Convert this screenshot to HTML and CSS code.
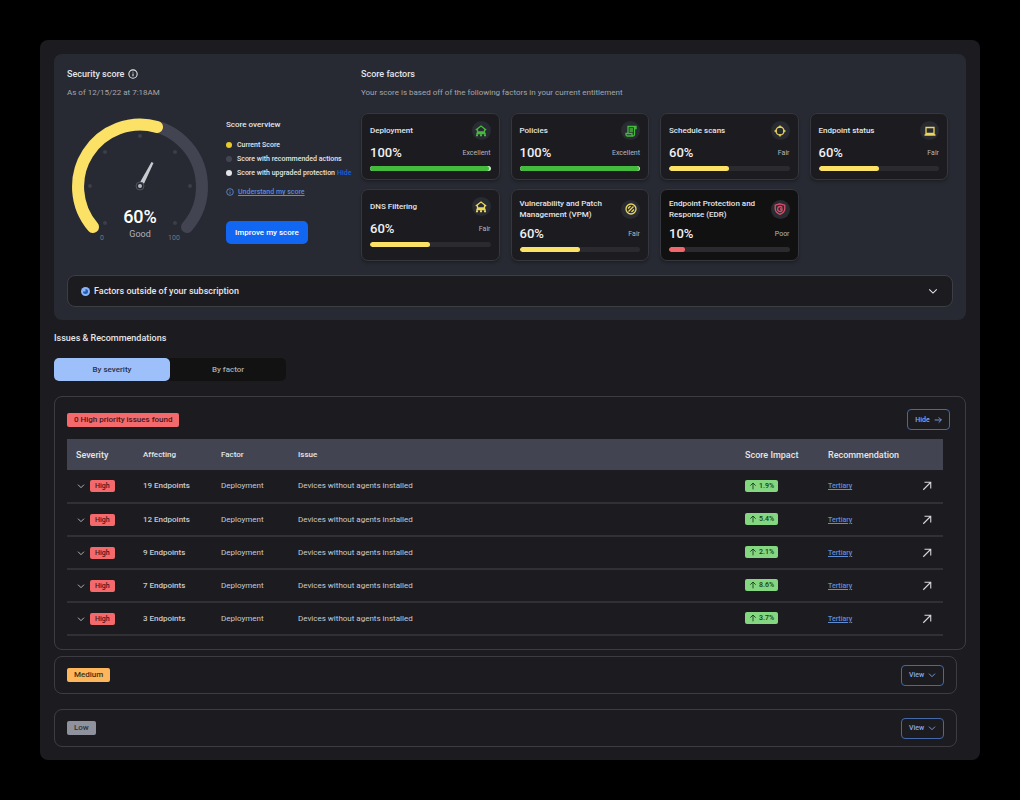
FILE: index.html
```html
<!DOCTYPE html>
<html lang="en">
<head>
    <meta charset="UTF-8">
    <meta name="viewport" content="width=device-width, initial-scale=1.0">
    <title>Security Score</title>
    <link rel="stylesheet" href="styles.css">
</head>
<body>

    <!-- Shared icons -->
    <svg class="sprite" aria-hidden="true">
        <symbol id="i-info" viewBox="0 0 12 12"><circle cx="6" cy="6" r="5"/><path d="M6 5.4v3.2M6 3.2v1"/></symbol>
        <symbol id="i-down" viewBox="0 0 12 12"><path d="M1.5 4 6 8.500 10.500 4"/></symbol>
        <symbol id="i-right" viewBox="0 0 12 12"><path d="M1 6h10M7 2l4 4-4 4"/></symbol>
        <symbol id="i-up" viewBox="0 0 12 12"><path d="M6 11V1.500M2 5.500l4-4 4 4"/></symbol>
        <symbol id="i-open" viewBox="0 0 12 12"><path d="M1.500 10.500l9-9M3 1.500h7.500V9"/></symbol>
        <symbol id="i-network" viewBox="0 0 12 12"><path d="M.8 5 6 1l5.200 4M2.500 4.500V7h7V4.500M6 7v3M2 10V8.500h8V10M1 10.500h2M5 10.500h2M9 10.500h2"/></symbol>
        <symbol id="i-policy" viewBox="0 0 12 12"><path d="M3 8V1.500h8V3.500H9.500M9.500 1.500V9.500q0 1.500-1.500 1.500H2.500Q1 11 1 9.500V8.500h6V9.500q0 1.500 1 1.500M4.500 4H8M4.500 6H8"/></symbol>
        <symbol id="i-target" viewBox="0 0 12 12"><circle cx="6" cy="6" r="4"/><path d="M6 .5v2.500M6 9v2.500M.5 6h2.500M9 6h2.500"/></symbol>
        <symbol id="i-laptop" viewBox="0 0 12 12"><path d="M2 2.500h8v6H2zM.5 10h11"/></symbol>
        <symbol id="i-patch" viewBox="0 0 12 12"><circle cx="6" cy="6" r="5"/><path d="M3.500 8.500l5-5M3 5.500 5.500 3M6.500 9 9 6.500"/></symbol>
        <symbol id="i-shield" viewBox="0 0 12 12"><path d="M6 .8 10.800 2.200V6Q10.500 9.500 6 11.300 1.500 9.500 1.200 6V2.200z"/><path d="M8.300 4.500Q6 2.500 4 4.500q-1 2 .5 3.500 2 1.200 3.500-.5V6H6"/></symbol>
    </svg>

    <main class="app">
        <section class="score-panel">
            <div class="score-top">
                <div class="score">
                    <h2>Security score <svg class="icon info"><use href="#i-info"/></svg></h2>
                    <p class="sub">As of 12/15/22 at 7:18AM</p>
                    <div class="score-body">
                        <svg class="gauge" viewBox="0 0 146 130" role="img" aria-label="Score 60%, good">
                            <path class="track" d="M26 111A62 62 0 1 1 120 111"/>
                            <path class="value" d="M26 111A62 62 0 0 1 90 11"/>
                            <g class="ticks">
                                <circle cx="73" cy="20" r="2"/>
                                <circle cx="38" cy="36" r="2"/>
                                <circle cx="108" cy="36" r="2"/>
                                <circle cx="23" cy="70" r="2"/>
                                <circle cx="123" cy="70" r="2"/>
                                <circle cx="38" cy="107" r="2"/>
                                <circle cx="108" cy="107" r="2"/>
                            </g>
                            <path class="needle" d="M71.500 69 84.500 46l2 1L75.500 71z"/>
                            <circle class="hub" cx="73" cy="70" r="4"/>
                            <circle class="hub-dot" cx="73" cy="70" r="2"/>
                            <text class="percent" x="73" y="107">60%</text>
                            <text class="grade" x="73" y="121">Good</text>
                            <text class="limit" x="35" y="124">0</text>
                            <text class="limit" x="107" y="124">100</text>
                        </svg>
                        <div class="overview">
                            <h3>Score overview</h3>
                            <ul>
                                <li><span class="dot current"></span>Current Score</li>
                                <li><span class="dot recommended"></span>Score with recommended actions</li>
                                <li><span class="dot upgraded"></span>Score with upgraded protection <a href="#">Hide</a></li>
                            </ul>
                            <a class="understand" href="#"><svg class="icon"><use href="#i-info"/></svg><span>Understand my score</span></a>
                            <button class="improve" type="button">Improve my score</button>
                        </div>
                    </div>
                </div>

                <div class="factors">
                    <h2>Score factors</h2>
                    <p class="sub">Your score is based off of the following factors in your current entitlement</p>
                    <div class="cards">
                        <article class="card good">
                            <div class="card-head"><h3>Deployment</h3><span class="badge"><svg class="icon"><use href="#i-network"/></svg></span></div>
                            <div class="card-score"><strong>100%</strong><span>Excellent</span></div>
                            <div class="bar"><div class="fill" style="width: 99%"></div></div>
                        </article>
                        <article class="card good">
                            <div class="card-head"><h3>Policies</h3><span class="badge"><svg class="icon"><use href="#i-policy"/></svg></span></div>
                            <div class="card-score"><strong>100%</strong><span>Excellent</span></div>
                            <div class="bar"><div class="fill" style="width: 99%"></div></div>
                        </article>
                        <article class="card fair">
                            <div class="card-head"><h3>Schedule scans</h3><span class="badge"><svg class="icon"><use href="#i-target"/></svg></span></div>
                            <div class="card-score"><strong>60%</strong><span>Fair</span></div>
                            <div class="bar"><div class="fill" style="width: 50%"></div></div>
                        </article>
                        <article class="card fair">
                            <div class="card-head"><h3>Endpoint status</h3><span class="badge"><svg class="icon"><use href="#i-laptop"/></svg></span></div>
                            <div class="card-score"><strong>60%</strong><span>Fair</span></div>
                            <div class="bar"><div class="fill" style="width: 50%"></div></div>
                        </article>
                        <article class="card fair">
                            <div class="card-head"><h3>DNS Filtering</h3><span class="badge"><svg class="icon"><use href="#i-network"/></svg></span></div>
                            <div class="card-score"><strong>60%</strong><span>Fair</span></div>
                            <div class="bar"><div class="fill" style="width: 50%"></div></div>
                        </article>
                        <article class="card fair">
                            <div class="card-head"><h3>Vulnerability and Patch Management (VPM)</h3><span class="badge"><svg class="icon"><use href="#i-patch"/></svg></span></div>
                            <div class="card-score"><strong>60%</strong><span>Fair</span></div>
                            <div class="bar"><div class="fill" style="width: 50%"></div></div>
                        </article>
                        <article class="card poor">
                            <div class="card-head"><h3>Endpoint Protection and Response (EDR)</h3><span class="badge"><svg class="icon"><use href="#i-shield"/></svg></span></div>
                            <div class="card-score"><strong>10%</strong><span>Poor</span></div>
                            <div class="bar"><div class="fill" style="width: 13%"></div></div>
                        </article>
                    </div>
                </div>
            </div>

            <button class="outside" type="button">
                <svg class="outside-icon" viewBox="0 0 10 10"><circle cx="5" cy="5" r="5" fill="#8ab4f8"/><path d="M5 2.200A2.800 2.800 0 1 1 2.200 5H5z" fill="#2459b8"/></svg>
                <span>Factors outside of your subscription</span>
                <svg class="icon chevron"><use href="#i-down"/></svg>
            </button>
        </section>

        <h2 class="issues-title">Issues &amp; Recommendations</h2>
        <div class="tabs">
            <button class="tab active" type="button">By severity</button>
            <button class="tab" type="button">By factor</button>
        </div>

        <section class="issues">
            <div class="issues-head">
                <span class="tag high">0 High priority issues found</span>
                <button class="toggle" type="button">Hide <svg class="icon"><use href="#i-right"/></svg></button>
            </div>
            <table>
                <colgroup>
                    <col class="c-severity"><col class="c-affecting"><col class="c-factor"><col><col class="c-impact"><col class="c-rec"><col class="c-open">
                </colgroup>
                <thead>
                    <tr>
                        <th class="large">Severity</th>
                        <th>Affecting</th>
                        <th>Factor</th>
                        <th>Issue</th>
                        <th class="large">Score Impact</th>
                        <th class="large" colspan="2">Recommendation</th>
                    </tr>
                </thead>
                <tbody>
                    <tr>
                        <td><div class="severity"><svg class="icon"><use href="#i-down"/></svg><span class="tag high small">High</span></div></td>
                        <td class="affecting">19 Endpoints</td>
                        <td>Deployment</td>
                        <td>Devices without agents installed</td>
                        <td><span class="impact"><svg class="icon"><use href="#i-up"/></svg>1.9%</span></td>
                        <td><a href="#">Tertiary</a></td>
                        <td><a class="open" href="#" aria-label="Open"><svg class="icon"><use href="#i-open"/></svg></a></td>
                    </tr>
                    <tr>
                        <td><div class="severity"><svg class="icon"><use href="#i-down"/></svg><span class="tag high small">High</span></div></td>
                        <td class="affecting">12 Endpoints</td>
                        <td>Deployment</td>
                        <td>Devices without agents installed</td>
                        <td><span class="impact"><svg class="icon"><use href="#i-up"/></svg>5.4%</span></td>
                        <td><a href="#">Tertiary</a></td>
                        <td><a class="open" href="#" aria-label="Open"><svg class="icon"><use href="#i-open"/></svg></a></td>
                    </tr>
                    <tr>
                        <td><div class="severity"><svg class="icon"><use href="#i-down"/></svg><span class="tag high small">High</span></div></td>
                        <td class="affecting">9 Endpoints</td>
                        <td>Deployment</td>
                        <td>Devices without agents installed</td>
                        <td><span class="impact"><svg class="icon"><use href="#i-up"/></svg>2.1%</span></td>
                        <td><a href="#">Tertiary</a></td>
                        <td><a class="open" href="#" aria-label="Open"><svg class="icon"><use href="#i-open"/></svg></a></td>
                    </tr>
                    <tr>
                        <td><div class="severity"><svg class="icon"><use href="#i-down"/></svg><span class="tag high small">High</span></div></td>
                        <td class="affecting">7 Endpoints</td>
                        <td>Deployment</td>
                        <td>Devices without agents installed</td>
                        <td><span class="impact"><svg class="icon"><use href="#i-up"/></svg>8.6%</span></td>
                        <td><a href="#">Tertiary</a></td>
                        <td><a class="open" href="#" aria-label="Open"><svg class="icon"><use href="#i-open"/></svg></a></td>
                    </tr>
                    <tr>
                        <td><div class="severity"><svg class="icon"><use href="#i-down"/></svg><span class="tag high small">High</span></div></td>
                        <td class="affecting">3 Endpoints</td>
                        <td>Deployment</td>
                        <td>Devices without agents installed</td>
                        <td><span class="impact"><svg class="icon"><use href="#i-up"/></svg>3.7%</span></td>
                        <td><a href="#">Tertiary</a></td>
                        <td><a class="open" href="#" aria-label="Open"><svg class="icon"><use href="#i-open"/></svg></a></td>
                    </tr>
                </tbody>
            </table>
        </section>

        <div class="groups">
            <section class="group">
                <span class="tag medium">Medium</span>
                <button class="toggle" type="button">View <svg class="icon"><use href="#i-down"/></svg></button>
            </section>
            <section class="group">
                <span class="tag low">Low</span>
                <button class="toggle" type="button">View <svg class="icon"><use href="#i-down"/></svg></button>
            </section>
        </div>
    </main>

</body>
</html>
```
FILE: styles.css
```css
* {
    margin: 0;
    padding: 0;
    box-sizing: border-box;
}

body {
    font-family: Roboto, sans-serif;
    font-size: 8px;
    line-height: 12px;
    background: #000;
    color: #e4e5e9;
    padding: 40px;
}

button {
    font: inherit;
    color: inherit;
    border: none;
    background: none;
    cursor: pointer;
}

a {
    color: #618cd2;
}

h2, h3 {
    font-weight: 500;
}

h2 {
    font-size: 9px;
    line-height: 12px;
}

.sprite {
    display: none;
}

.icon {
    width: 8px;
    height: 8px;
    flex: none;
    fill: none;
    stroke: currentColor;
    stroke-width: 1.3;
}

.app {
    background: #1c1c20;
    border-radius: 8px;
    padding: 14px 14px 13px;
}

/* Score panel */
.score-panel {
    background: #272a32;
    border-radius: 8px;
    padding: 14px 13px 13px;
}

.score-top {
    display: flex;
}

.score {
    flex: 0 0 294px;
    white-space: nowrap;
}

.score h2 {
    display: flex;
    align-items: center;
    gap: 4px;
}

.info {
    width: 10px;
    height: 10px;
}

.sub {
    color: #a4a6ae;
    margin-top: 7px;
}

.score-body {
    display: flex;
    gap: 13px;
    margin-top: 17px;
}

.gauge {
    width: 146px;
    height: 130px;
    flex: none;
}

.track,
.value {
    fill: none;
    stroke: #424551;
    stroke-width: 12;
    stroke-linecap: round;
}

.value {
    stroke: #fbe165;
}

.ticks {
    fill: #3c3f49;
}

.needle {
    fill: #c8cad0;
}

.hub {
    fill: #272a32;
    stroke: #50535d;
}

.hub-dot {
    fill: #b5b7be;
}

.gauge text {
    text-anchor: middle;
}

.percent {
    font-size: 18px;
    font-weight: 500;
    fill: #fff;
}

.grade {
    font-size: 9px;
    fill: #b0b2b9;
}

.limit {
    font-size: 7px;
    fill: #747780;
}

.overview {
    font-size: 7px;
    font-weight: 500;
    padding-top: 3px;
}

.overview h3 {
    font-size: 8px;
}

.overview ul {
    list-style: none;
    margin-top: 7px;
}

.overview li {
    display: flex;
    align-items: center;
    height: 14px;
}

.overview li a {
    color: #1762d8;
    margin-left: 2px;
    text-decoration: none;
}

.dot {
    width: 6px;
    height: 6px;
    border-radius: 50%;
    margin-right: 5px;
}

.current {
    background: #e9ca2c;
}

.recommended {
    background: #424551;
}

.upgraded {
    background: #e4e5e9;
}

.understand {
    display: flex;
    align-items: center;
    gap: 4px;
    margin-top: 6px;
    text-decoration: none;
}

.understand span {
    text-decoration: underline;
}

.improve {
    background: #1167f2;
    color: #fff;
    font-size: 8px;
    border-radius: 5px;
    height: 23px;
    padding: 0 9px;
    margin-top: 23px;
}

.factors {
    flex: 1;
    padding-right: 5px;
}

.cards {
    display: grid;
    grid-template-columns: repeat(4, 1fr);
    gap: 9px 11px;
    margin-top: 14px;
}

.card {
    background: #1c1c20;
    border: 1px solid #35373e;
    border-radius: 7px;
    padding: 7px 8px 8px;
    box-shadow: 0 2px 3px rgba(0, 0, 0, 0.25);
}

.card-head {
    display: flex;
    align-items: center;
    justify-content: space-between;
    margin-bottom: 5px;
}

.card h3 {
    font-size: 8px;
    line-height: 11px;
    padding: 1px 0;
}

.badge {
    display: flex;
    align-items: center;
    justify-content: center;
    flex: none;
    width: 19px;
    height: 19px;
    border-radius: 50%;
    background: #292b33;
}

.badge .icon {
    width: 12px;
    height: 12px;
}

.card-score {
    display: flex;
    align-items: center;
    justify-content: space-between;
    height: 16px;
    font-size: 7px;
    color: #b6b8be;
}

.card-score strong {
    font-size: 13px;
    font-weight: 500;
    color: #f0f0f3;
}

.bar {
    height: 5px;
    margin-top: 5px;
    border-radius: 3px;
    background: #2a2a2f;
    overflow: hidden;
}

.fill {
    height: 100%;
    border-radius: 3px;
}

.good .badge { color: #45bb3d; }
.good .bar { background: #c5e8c2; }
.good .fill { background: #45bb3d; }

.fair .badge { color: #ecd75d; }
.fair .fill { background: #fbe165; }

.poor { background: #111112; }
.poor .badge { color: #d9506a; }
.poor .fill { background: #f0686c; }

.outside {
    display: flex;
    align-items: center;
    width: 100%;
    height: 32px;
    margin-top: 14px;
    padding: 0 14px 0 13px;
    background: #1c1c20;
    border: 1px solid #3c3e45;
    border-radius: 8px;
    font-size: 9px;
    font-weight: 500;
    text-align: left;
}

.outside-icon {
    width: 9px;
    height: 9px;
    margin-right: 4px;
}

.chevron {
    width: 10px;
    height: 10px;
    margin-left: auto;
}

/* Issues */
.issues-title {
    margin-top: 12px;
}

.tabs {
    display: inline-flex;
    margin: 14px 0 15px;
    background: #121213;
    border-radius: 5px;
    vertical-align: top;
}

.tab {
    width: 116px;
    height: 23px;
    border-radius: 5px;
    color: #a9abb2;
    font-weight: 500;
}

.tab.active {
    background: #9dc0fb;
    color: #24324c;
}

.issues {
    border: 1px solid #3c3c42;
    border-radius: 8px;
    padding: 12px 15px 13px 12px;
}

.issues-head,
.group {
    display: flex;
    align-items: center;
    justify-content: space-between;
}

.tag {
    display: inline-block;
    padding: 0 7px;
    height: 14px;
    line-height: 14px;
    border-radius: 2px;
    font-weight: 500;
    color: #47171a;
}

.tag.high { background: #f4696b; }
.tag.medium { background: #fdb65c; color: #43300f; }
.tag.low { background: #8f929c; color: #303239; }

.tag.small {
    padding: 0 5px;
    height: 12px;
    line-height: 12px;
    font-size: 7px;
}

.toggle {
    display: flex;
    align-items: center;
    justify-content: center;
    gap: 4px;
    width: 43px;
    height: 21px;
    border: 1px solid #4468a8;
    border-radius: 4px;
    color: #82aaf0;
    font-size: 7px;
    font-weight: 500;
}

table {
    width: calc(100% - 7px);
    margin-top: 9px;
    border-collapse: collapse;
    table-layout: fixed;
}

.c-severity { width: 67px; }
.c-affecting { width: 78px; }
.c-factor { width: 77px; }
.c-impact { width: 83px; }
.c-rec { width: 94px; }
.c-open { width: 30px; }

th {
    height: 31px;
    background: #424551;
    padding-left: 9px;
    text-align: left;
    font-weight: 500;
}

th.large {
    font-size: 9px;
}

td {
    height: 33px;
    padding-left: 9px;
    border-bottom: 2px solid #303035;
    color: #c9cad0;
}

.affecting {
    font-weight: 500;
}

.severity {
    display: flex;
    align-items: center;
    gap: 5px;
    padding-left: 1px;
}

td a {
    font-size: 7px;
    font-weight: 500;
}

.impact {
    display: inline-flex;
    align-items: center;
    gap: 2px;
    height: 12px;
    padding: 0 4px;
    border-radius: 2px;
    background: #84d681;
    color: #153c16;
    font-size: 7px;
    font-weight: 500;
    vertical-align: middle;
}

.open {
    display: flex;
    color: #d6d7db;
}

.open .icon {
    width: 10px;
    height: 10px;
}

.groups {
    display: flex;
    flex-direction: column;
    gap: 15px;
    margin: 6px 9px 0 0;
}

.group {
    height: 38px;
    padding: 0 12px;
    border: 1px solid #3c3c42;
    border-radius: 8px;
}
```
